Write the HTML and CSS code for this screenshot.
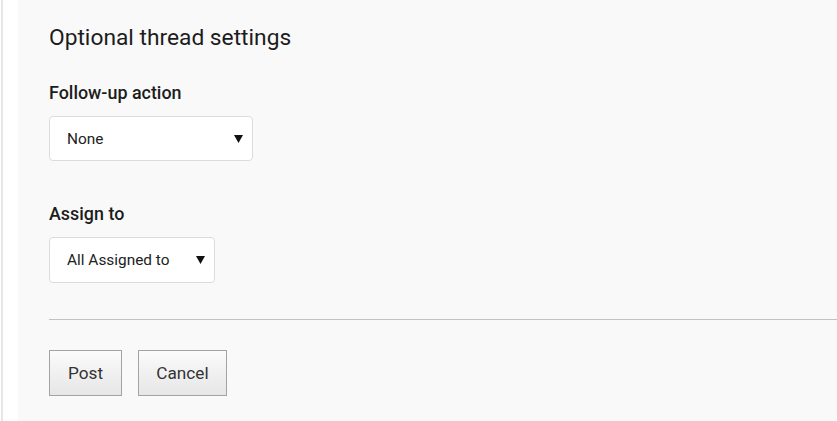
FILE: index.html
```html
<!DOCTYPE html>
<html lang="en">
<head>
<meta charset="utf-8">
<title>Optional thread settings</title>
<link rel="stylesheet" href="styles.css">
</head>
<body>
<div class="page">
  <div class="rail"></div>
  <main class="panel">
    <h2 class="title">Optional thread settings</h2>

    <div class="field field-first">
      <label class="label">Follow-up action</label>
      <div class="select select-wide" role="combobox">
        <span class="select-text">None</span>
        <svg class="caret" width="9" height="9" viewBox="0 0 9 9"><polygon points="0,1 9,1 4.5,9" fill="#111"/></svg>
      </div>
    </div>

    <div class="field field-second">
      <label class="label">Assign to</label>
      <div class="select select-narrow" role="combobox">
        <span class="select-text">All Assigned to</span>
        <svg class="caret" width="9" height="9" viewBox="0 0 9 9"><polygon points="0,1 9,1 4.5,9" fill="#111"/></svg>
      </div>
    </div>

    <hr class="divider">

    <div class="actions">
      <button class="btn btn-post">Post</button>
      <button class="btn btn-cancel">Cancel</button>
    </div>
  </main>
</div>
</body>
</html>
```

FILE: styles.css
```css
html, body {
  margin: 0;
  padding: 0;
  background: #ffffff;
}

body {
  font-family: Roboto, "Liberation Sans", Arial, sans-serif;
  color: #1f1f1f;
}

.page {
  display: flex;
  min-height: 421px;
}

.rail {
  width: 15px;
  margin-left: 1px;
  border-left: 2px solid #e6e6e6;
  background: #ffffff;
  flex: none;
}

.panel {
  flex: 1;
  background: #f9f9f9;
  padding: 25px 0 0 31px;
  min-height: 396px;
}

.title {
  margin: 0;
  font-size: 22.75px;
  line-height: 26px;
  font-weight: 400;
  color: #1c1c1c;
}

.field {
  display: flex;
  flex-direction: column;
  align-items: flex-start;
}

.field-first {
  margin-top: 32px;
}

.field-second {
  margin-top: 43px;
}

.label {
  font-size: 17.9px;
  line-height: 20px;
  font-weight: 500;
  color: #1c1c1c;
}

.select {
  margin-top: 13px;
  box-sizing: border-box;
  height: 45px;
  background: #ffffff;
  border: 1px solid #dcdcdc;
  border-radius: 4px;
  display: flex;
  align-items: center;
  justify-content: space-between;
  padding: 0 9px 0 17px;
  font-size: 15.4px;
  color: #222222;
}

.select-wide {
  width: 204px;
}

.select-narrow {
  width: 166px;
  height: 46px;
}

.caret {
  display: block;
  margin-top: -1px;
}

.divider {
  margin: 36px 0 0 0;
  border: 0;
  border-top: 1px solid #c2c2c2;
  height: 0;
}

.actions {
  margin-top: 30px;
  display: flex;
  gap: 16px;
}

.btn {
  box-sizing: border-box;
  height: 46px;
  border: 1px solid #a3a3a3;
  border-radius: 0;
  background: linear-gradient(#fbfbfb, #e6e6e6);
  font-family: Roboto, "Liberation Sans", Arial, sans-serif;
  font-size: 17.2px;
  color: #333333;
  padding: 0;
  cursor: pointer;
}

.btn-post {
  width: 73px;
}

.btn-cancel {
  width: 89px;
}
```
